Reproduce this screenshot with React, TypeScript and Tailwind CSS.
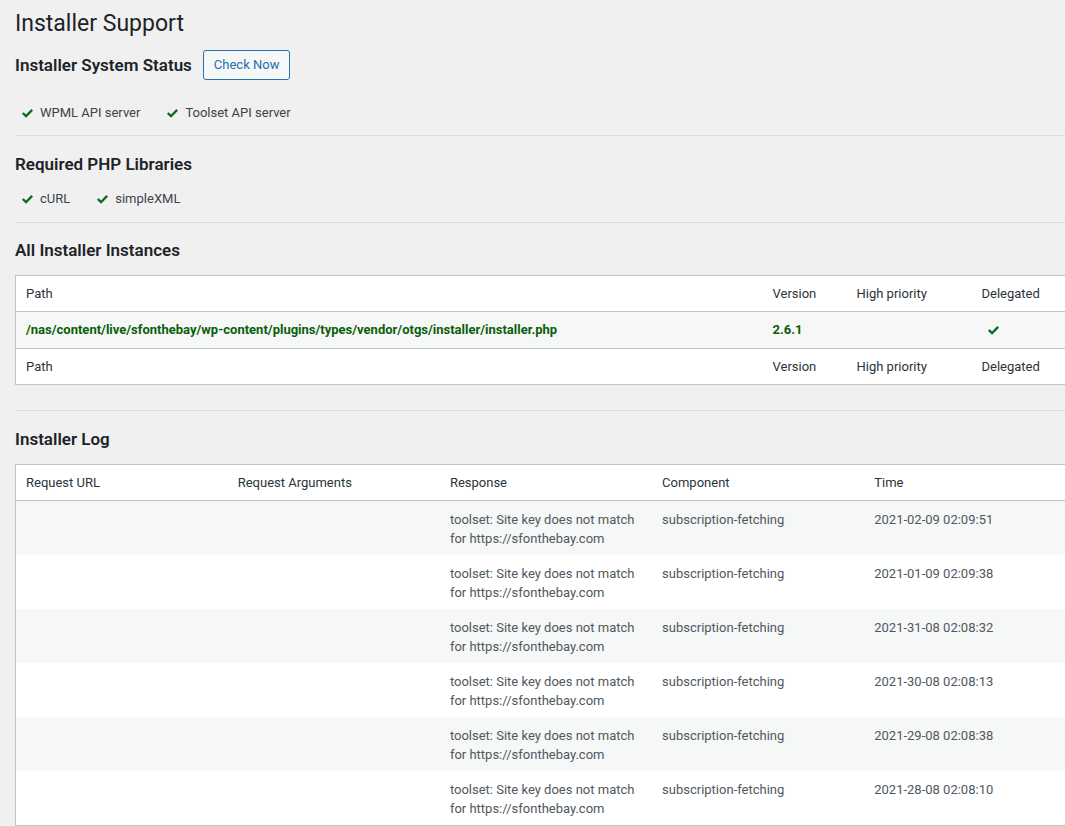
const LOG = [
  { time: '2021-02-09 02:09:51' },
  { time: '2021-01-09 02:09:38' },
  { time: '2021-31-08 02:08:32' },
  { time: '2021-30-08 02:08:13' },
  { time: '2021-29-08 02:08:38' },
  { time: '2021-28-08 02:08:10' },
]

const HEAD = ['Path', 'Version', 'High priority', 'Delegated']

function Tick({ className = '' }: { className?: string }) {
  return (
    <svg viewBox="0 0 20 20" className={`w-[15px] h-[15px] ${className}`} fill="#0a6b1c">
      <path d="M2.6 10.4l2.2-2.2 3.3 3.2 7-7.3 2.2 2.2-9.2 9.5z" />
    </svg>
  )
}

function StatusItem({ label }: { label: string }) {
  return (
    <span className="flex items-center gap-[5px]">
      <Tick />
      <span>{label}</span>
    </span>
  )
}

export default function App() {
  const font = { fontFamily: 'Roboto, "Noto Sans", sans-serif' }
  return (
    <div className="w-full min-h-[826px] overflow-hidden bg-[#f0f0f1] text-[13px] text-[#3c434a]" style={font}>
      <div className="pl-[15px]">
        <h1 className="pt-[9px] text-[23px] leading-[30px] font-normal text-[#1d2327]">Installer Support</h1>

        {/* System status */}
        <div className="mt-[11px] flex items-center gap-[11px] h-[30px]">
          <h2 className="text-[17px] font-semibold text-[#1d2327] leading-[24px]">Installer System Status</h2>
          <button className="h-[30px] px-[10px] rounded-[3px] border border-[#2271b1] bg-[#f6f7f7] text-[#2271b1] text-[13px] leading-[28px]">
            Check Now
          </button>
        </div>
        <div className="mt-[23px] h-[20px] flex items-center gap-[25px] pl-[5px] leading-[20px]">
          <StatusItem label="WPML API server" />
          <StatusItem label="Toolset API server" />
        </div>
        <hr className="mt-[12px] border-0 border-t border-[#dcdcde]" />

        {/* PHP libs */}
        <h2 className="mt-[16px] text-[17px] font-semibold text-[#1d2327] leading-[24px]">Required PHP Libraries</h2>
        <div className="mt-[13px] h-[20px] flex items-center gap-[25px] pl-[5px] leading-[20px]">
          <StatusItem label="cURL" />
          <StatusItem label="simpleXML" />
        </div>
        <hr className="mt-[13px] border-0 border-t border-[#dcdcde]" />

        {/* Instances */}
        <h2 className="mt-[15px] text-[17px] font-semibold text-[#1d2327] leading-[24px]">All Installer Instances</h2>
        <table className="mt-[13px] w-[1090px] table-fixed border border-[#c3c4c7] bg-white border-collapse">
          <colgroup>
            <col className="w-[747px]" />
            <col className="w-[84px]" />
            <col className="w-[125px]" />
            <col />
          </colgroup>
          <thead>
            <tr className="border-b border-[#c3c4c7] h-[36px]">
              {HEAD.map((h) => (
                <th key={h} className="px-[10px] text-left font-normal text-[#2c3338]">{h}</th>
              ))}
            </tr>
          </thead>
          <tbody>
            <tr className="bg-[#f6f7f7] h-[37px] text-[#0b5e0b] font-bold">
              <td className="px-[10px] whitespace-nowrap">/nas/content/live/sfonthebay/wp-content/plugins/types/vendor/otgs/installer/installer.php</td>
              <td className="px-[10px]">2.6.1</td>
              <td className="px-[10px]"></td>
              <td className="px-[10px]"><Tick className="ml-[4px]" /></td>
            </tr>
          </tbody>
          <tfoot>
            <tr className="border-t border-[#c3c4c7] h-[36px]">
              {HEAD.map((h) => (
                <th key={h} className="px-[10px] text-left font-normal text-[#2c3338]">{h}</th>
              ))}
            </tr>
          </tfoot>
        </table>
        <hr className="mt-[25px] border-0 border-t border-[#dcdcde]" />

        {/* Log */}
        <h2 className="mt-[16px] text-[17px] font-semibold text-[#1d2327] leading-[24px]">Installer Log</h2>
        <table className="mt-[13px] w-[1062px] table-fixed border border-[#c3c4c7] bg-white border-collapse">
          <thead>
            <tr className="border-b border-[#c3c4c7] h-[36px]">
              {['Request URL', 'Request Arguments', 'Response', 'Component', 'Time'].map((h) => (
                <th key={h} className="w-[212px] px-[10px] text-left font-normal text-[#2c3338]">{h}</th>
              ))}
            </tr>
          </thead>
          <tbody>
            {LOG.map((r, i) => (
              <tr key={r.time} className={i % 2 === 0 ? 'bg-[#f6f7f7]' : 'bg-white'}>
                <td className="px-[10px] pt-[9px] pb-[7px] align-top leading-[19px]"></td>
                <td className="px-[10px] pt-[9px] pb-[7px] align-top leading-[19px]"></td>
                <td className="px-[10px] pt-[9px] pb-[7px] align-top leading-[19px] text-[#50575e]">
                  toolset: Site key does not match for https://sfonthebay.com
                </td>
                <td className="px-[10px] pt-[9px] pb-[7px] align-top leading-[19px] text-[#50575e]">subscription-fetching</td>
                <td className="px-[10px] pt-[9px] pb-[7px] align-top leading-[19px] text-[#50575e]">{r.time}</td>
              </tr>
            ))}
          </tbody>
        </table>
      </div>
    </div>
  )
}
